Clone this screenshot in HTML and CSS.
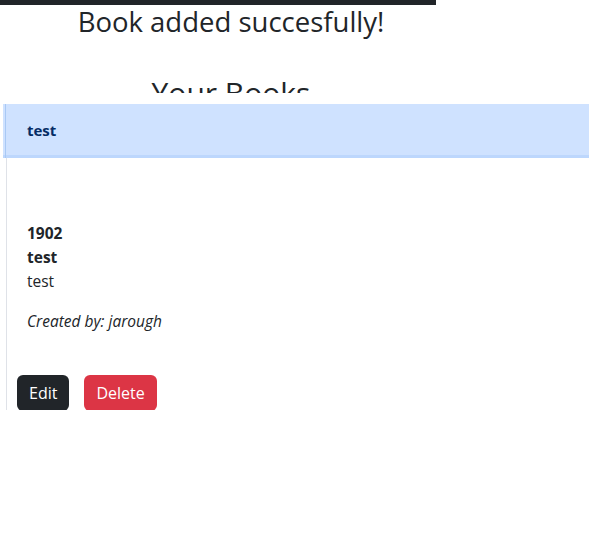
FILE: index.html
```html
<!DOCTYPE html>
<html>
<head>
<meta charset="utf-8">
<link rel="stylesheet" href="styles.css">
</head>
<body>
<div class="topbar"></div>
<div class="heads">
  <h3 class="msg">Book added succesfully!</h3>
  <div class="title-clip"><h2 class="title">Your Books</h2></div>
</div>
<div class="book">
  <div class="book-head"><strong>test</strong></div>
  <div class="book-body">
    <div class="info">
      <div class="b">1902</div>
      <div class="b">test</div>
      <div>test</div>
      <p class="creator">Created by: jarough</p>
    </div>
    <div class="actions">
      <button class="btn btn-dark">Edit</button>
      <button class="btn btn-danger">Delete</button>
    </div>
  </div>
</div>
</body>
</html>
```
FILE: styles.css
```css
html, body {
  margin: 0;
  padding: 0;
  background: #fff;
  overflow-x: hidden;
}
body {
  font-family: "Open Sans", "Noto Sans", sans-serif;
  font-size: 16px;
  line-height: 24px;
  color: #212529;
}
.topbar {
  width: 436px;
  height: 5px;
  background: #212529;
}
.heads {
  width: 462px;
  text-align: center;
  margin-bottom: 11px;
}
.msg {
  margin: 0;
  font-size: 27.5px;
  font-weight: 400;
  line-height: 34px;
}
.title-clip {
  height: 54px;
  overflow: hidden;
  display: flex;
  align-items: flex-end;
  justify-content: center;
}
.title {
  margin: 0 0 -18px;
  font-size: 30px;
  font-weight: 400;
  line-height: 36px;
}
.book {
  margin-left: 3px;
}
.book-head {
  position: relative;
  background: #cfe2ff;
  border-bottom: 3px solid #bdd7fd;
  height: 51px;
  display: flex;
  align-items: center;
  padding-left: 24px;
  color: #052c65;
  font-size: 15px;
}
.book-head::before {
  content: "";
  position: absolute;
  left: 2px;
  top: 0;
  bottom: -3px;
  width: 1px;
  background: #a9c9f5;
}
.book-body {
  margin-left: 3px;
  border-left: 1px solid #dfe2e8;
  height: 252px;
}
.info {
  padding: 63px 0 0 20px;
  font-size: 15.5px;
}
.b { font-weight: 700; }
.creator {
  margin: 16px 0 0;
  font-style: italic;
}
.actions {
  display: flex;
  gap: 15px;
  margin-top: 42px;
  margin-left: 10px;
}
.btn {
  font-family: inherit;
  font-size: 16px;
  line-height: 24px;
  height: 36px;
  padding: 0 12px;
  border: 0;
  border-radius: 6px;
  color: #fff;
  cursor: pointer;
}
.btn-dark { background: #212529; }
.btn-danger { background: #dc3545; }
```
